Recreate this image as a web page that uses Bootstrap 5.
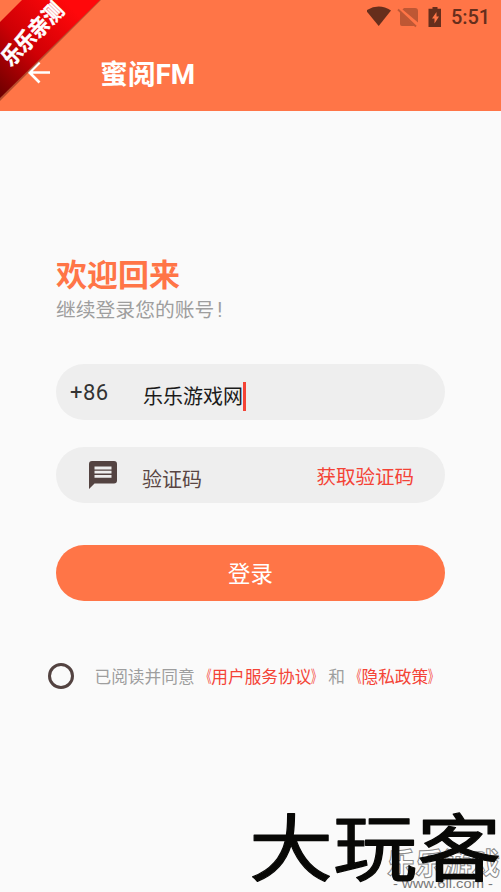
<!DOCTYPE html>
<html lang="zh-CN">
<head>
<meta charset="utf-8">
<meta name="viewport" content="width=device-width, initial-scale=1">
<title>蜜阅FM</title>
<link rel="stylesheet" href="https://cdn.jsdelivr.net/npm/bootstrap@5.3.0/dist/css/bootstrap.min.css">
<style>
body{font-family:Roboto,"Noto Sans CJK SC",sans-serif;background:#fafafa;overflow:hidden}
.screen{width:501px;height:892px}
.app-top{background:#ff7547;height:111px}
.status{height:34px;padding-right:11px;color:#662e1c}
.clock{font-size:20px;font-weight:500;line-height:34px;letter-spacing:-.1px}
.title-bar{height:77px;padding-left:25px}
.app-title{font-size:27.8px;font-weight:700;line-height:40px;margin-left:47px;padding-top:4px}
.ribbon{left:0;top:0}
.form-area{padding:147px 56px 0}
.welcome{font-size:31px;font-weight:700;line-height:36px;color:#ff7547}
.sub{font-size:19.8px;line-height:24px;color:#9e9e9e;margin-top:5px}
.sub span{margin-left:3px}
.field{height:56px;background:#eee;width:389px}
.phone-field{margin-top:41px}
.sms-field{margin-top:27px}
.code-prefix{font-size:22px;letter-spacing:.45px;width:87px;padding-left:14px;color:#333}
.sms-icon{width:86px;padding-left:33px;line-height:0}
.val{font-size:20px;line-height:28px;padding-top:9px;color:#1b1b1b}
.caret{width:3px;height:29px;background:#f44336;margin-top:9px}
.hint{color:#5a4643;padding-top:10px}
.red{color:#f44336}
.get-code{font-size:19.5px;padding-right:31px;padding-top:5px;line-height:28px}
.login{height:56px;width:389px;background:#ff7547;font-size:22.4px;line-height:59px;margin-top:42px}
.login:hover{background:#f66b3d}
.terms{padding:0 0 0 48px;margin-top:60px;font-size:16.7px;line-height:26px;color:#9e9e9e}
.terms-copy{padding-top:4px}
.bra,.ket{display:inline-block;transform:scaleX(.62)}
.bra{transform-origin:right}
.ket{transform-origin:left}
.ring{width:26px;height:26px;border:3px solid #534341;margin-right:20.500px}
.watermark{left:240px;bottom:0}
</style>
<script src="https://cdn.jsdelivr.net/npm/bootstrap@5.3.0/dist/js/bootstrap.bundle.min.js"></script>
</head>
<body>
<div class="screen position-relative overflow-hidden">
  <header class="app-top">
    <div class="status d-flex justify-content-end align-items-center">
      <svg width="76" height="34" viewBox="0 0 76 34" class="me-2" fill="#662e1c">
        <path d="M-1 10.500Q12 2.500 24 10.500L11.700 26Z"/>
        <g opacity=".42"><path d="M37 8h11q3 0 3 3v11.500L35.500 9.500ZM33 12L47.500 26H35q-2 0-2-2Z"/><path d="M31 9.500L49 26.500" stroke="#662e1c" stroke-width="1.800"/></g>
        <path d="M65.500 7h5v1.800h3.500v18.200H61.500V8.800h4Z"/><path d="M69.500 12l-4.500 6.500h2.500v5l4.500-7h-2.500Z" fill="#ff7547"/>
      </svg>
      <span class="clock">5:51</span>
    </div>
    <div class="title-bar d-flex align-items-center text-white">
      <svg width="28" height="28" viewBox="0 0 28 28" fill="none" stroke="#fff" stroke-width="2.700"><path d="M25 13.500H6M14.500 3.500L4.500 13.500L14.500 23.500"/></svg>
      <h1 class="app-title mb-0">蜜阅FM</h1>
    </div>
  </header>

  <svg class="ribbon position-absolute" width="101" height="101" viewBox="0 0 101 101">
    <defs><linearGradient id="rib" gradientUnits="userSpaceOnUse" x1="0" y1="100" x2="82" y2="18"><stop stop-color="#680000"/><stop offset=".5" stop-color="#cf0005"/><stop offset="1" stop-color="#ff080b"/></linearGradient></defs>
    <path d="M0 101L101 0H97L0 97Z" fill="#7c2b17" opacity=".55"/>
    <path d="M22 0H100L0 98V22Z" fill="url(#rib)"/>
    <text transform="translate(11 67.500) rotate(-46)" font-family="Noto Sans CJK SC,sans-serif" font-weight="700" font-size="22" textLength="78" lengthAdjust="spacingAndGlyphs" fill="#fff" stroke="#fff" stroke-width=".5">乐乐亲测</text>
  </svg>

  <main>
    <div class="form-area">
      <h2 class="welcome mb-0">欢迎回来</h2>
      <p class="sub mb-0">继续登录您的账号<span>!</span></p>
      <div class="field phone-field rounded-pill d-flex align-items-center">
        <span class="code-prefix">+86</span>
        <span class="val">乐乐游戏网</span><span class="caret"></span>
      </div>
      <div class="field sms-field rounded-pill d-flex align-items-center">
        <span class="sms-icon">
          <svg width="28" height="28" viewBox="0 0 28 28"><path d="M3 0H25Q28 0 28 3V19.500Q28 22.500 25 22.500H5.500L0 28V3Q0 0 3 0Z" fill="#534341"/><path d="M5.500 7H22.500M5.500 11.200H22.500M5.500 15.400H22.500" stroke="#eee" stroke-width="2.800"/></svg>
        </span>
        <span class="val hint">验证码</span>
        <span class="get-code red ms-auto">获取验证码</span>
      </div>
      <button class="btn login rounded-pill text-white border-0 p-0 d-block">登录</button>
    </div>
    <div class="terms d-flex align-items-center text-nowrap">
      <span class="ring rounded-circle"></span>
      <span class="terms-copy">已阅读并同意<span class="red"><span class="bra">《</span>用户服务协议<span class="ket">》</span></span>和<span class="red"><span class="bra">《</span>隐私政策<span class="ket">》</span></span></span>
    </div>
  </main>

  <svg class="watermark position-absolute" width="261" height="92" viewBox="240 800 261 92">
    <g font-family="Noto Sans CJK SC,sans-serif" font-weight="700" fill="#fff" stroke="#8a8a8a">
      <text x="387" y="874" font-size="30" textLength="113" lengthAdjust="spacingAndGlyphs" stroke-width="1">乐乐游戏</text>
      <text x="393" y="888" font-family="Liberation Sans,sans-serif" font-weight="400" font-size="12.500" textLength="100" lengthAdjust="spacingAndGlyphs" fill="#777" stroke="none">- www.6ll.com -</text>
    </g>
    <text transform="translate(249 875) scale(1 .89)" font-family="Noto Sans CJK SC,sans-serif" font-size="82" font-weight="400" textLength="252" lengthAdjust="spacingAndGlyphs" fill="#080806" stroke="#080806" stroke-width="1.300" stroke-linejoin="round">大玩客</text>
  </svg>
</div>
</body>
</html>
